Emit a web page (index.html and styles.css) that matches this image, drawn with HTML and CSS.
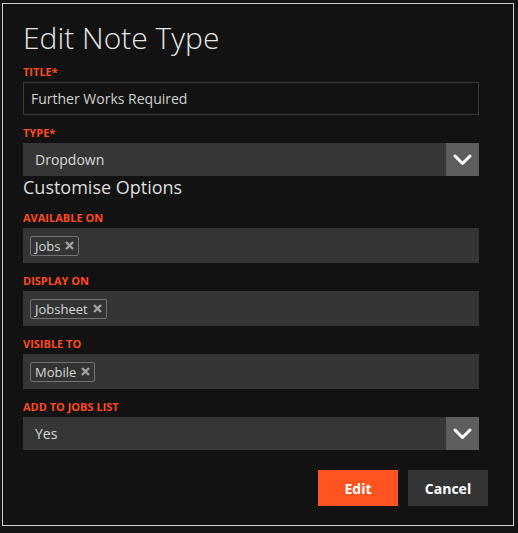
FILE: index.html
```html
<!DOCTYPE html>
<html lang="en">
<head>
    <meta charset="UTF-8">
    <meta name="viewport" content="width=device-width, initial-scale=1.0">
    <title>Edit Note Type</title>
    <link rel="stylesheet" href="styles.css">
</head>
<body>
    <div class="modal">
        <h1>Edit Note Type</h1>

        <form id="note-type-form">
            <div class="form-group">
                <label for="note-title">Title*</label>
                <input type="text" id="note-title" value="Further Works Required">
            </div>

            <div class="form-group no-gap">
                <label>Type*</label>
                <div class="select">
                    <span class="select-value">Dropdown</span>
                    <span class="select-arrow">
                        <svg width="19" height="12" viewBox="0 0 19 12"><polyline points="2,2 9.5,9.5 17,2" fill="none" stroke="#fff" stroke-width="3" stroke-linecap="round" stroke-linejoin="round"/></svg>
                    </span>
                </div>
            </div>

            <h2>Customise Options</h2>

            <div class="form-group">
                <label>Available On</label>
                <div class="tag-box">
                    <span class="tag">Jobs <svg class="tag-remove" width="9" height="9" viewBox="0 0 9 9"><path d="M1 1 L8 8 M8 1 L1 8" stroke="#a3a3a3" stroke-width="2.4"/></svg></span>
                </div>
            </div>

            <div class="form-group">
                <label>Display On</label>
                <div class="tag-box">
                    <span class="tag">Jobsheet <svg class="tag-remove" width="9" height="9" viewBox="0 0 9 9"><path d="M1 1 L8 8 M8 1 L1 8" stroke="#a3a3a3" stroke-width="2.4"/></svg></span>
                </div>
            </div>

            <div class="form-group">
                <label>Visible To</label>
                <div class="tag-box">
                    <span class="tag">Mobile <svg class="tag-remove" width="9" height="9" viewBox="0 0 9 9"><path d="M1 1 L8 8 M8 1 L1 8" stroke="#a3a3a3" stroke-width="2.4"/></svg></span>
                </div>
            </div>

            <div class="form-group">
                <label>Add To Jobs List</label>
                <div class="select">
                    <span class="select-value">Yes</span>
                    <span class="select-arrow">
                        <svg width="19" height="12" viewBox="0 0 19 12"><polyline points="2,2 9.5,9.5 17,2" fill="none" stroke="#fff" stroke-width="3" stroke-linecap="round" stroke-linejoin="round"/></svg>
                    </span>
                </div>
            </div>

            <div class="modal-footer">
                <button type="submit" class="btn-edit">Edit</button>
                <button type="button" class="btn-cancel">Cancel</button>
            </div>
        </form>
    </div>
</body>
</html>
```

FILE: styles.css
```css
body {
    font-family: "Open Sans", Arial, sans-serif;
    background-color: #151515;
    margin: 0;
    padding: 0;
}

.modal {
    box-sizing: border-box;
    width: 512px;
    margin: 3px 0 0 2px;
    padding: 16px 34px 19px 20px;
    background: #121212;
    border: 1px solid #cfcfcf;
}

h1 {
    margin: 0 0 8px 0;
    font-size: 30px;
    font-weight: 300;
    line-height: 36px;
    color: #e6e6e6;
}

h2 {
    margin: 1px 0 13px 0;
    font-size: 18px;
    font-weight: 400;
    line-height: 20px;
    color: #dedede;
}

.form-group {
    margin-bottom: 10px;
}

.form-group.no-gap {
    margin-bottom: 0;
}

label {
    display: block;
    margin-bottom: 3px;
    font-size: 11px;
    font-weight: 700;
    line-height: 15px;
    text-transform: uppercase;
    color: #ff4b1c;
}

input {
    box-sizing: border-box;
    width: 100%;
    height: 33px;
    padding: 0 7px;
    font-family: "Open Sans", Arial, sans-serif;
    font-size: 14px;
    color: #d0d0d0;
    background-color: #121212;
    border: 1px solid #3a3a3a;
    border-radius: 0;
    outline: none;
}

.select {
    display: flex;
    height: 33px;
    background: #363636;
}

.select-value {
    flex: 1;
    padding-left: 12px;
    font-size: 14px;
    line-height: 33px;
    color: #d8d8d8;
}

.select-arrow {
    display: flex;
    align-items: center;
    justify-content: center;
    width: 33px;
    background: #5e5e5e;
}

.tag-box {
    display: flex;
    align-items: center;
    height: 35px;
    padding: 0 7px;
    background: #353535;
}

.tag {
    display: inline-flex;
    align-items: center;
    gap: 5px;
    height: 18px;
    padding: 0 4px;
    font-size: 13px;
    color: #d6d6d6;
    background: #333;
    border: 1px solid #737373;
    border-radius: 2px;
}

.modal-footer {
    display: flex;
    justify-content: flex-end;
    gap: 10px;
    margin: 20px -9px 0 0;
}

button {
    width: 80px;
    height: 36px;
    font-family: "Open Sans", Arial, sans-serif;
    font-size: 14px;
    font-weight: 700;
    color: #fff;
    border: none;
    border-radius: 0;
    cursor: pointer;
}

.btn-edit {
    background: #ff5420;
}

.btn-cancel {
    background: #343434;
}

.btn-edit:hover {
    background: #e84a18;
}
```
